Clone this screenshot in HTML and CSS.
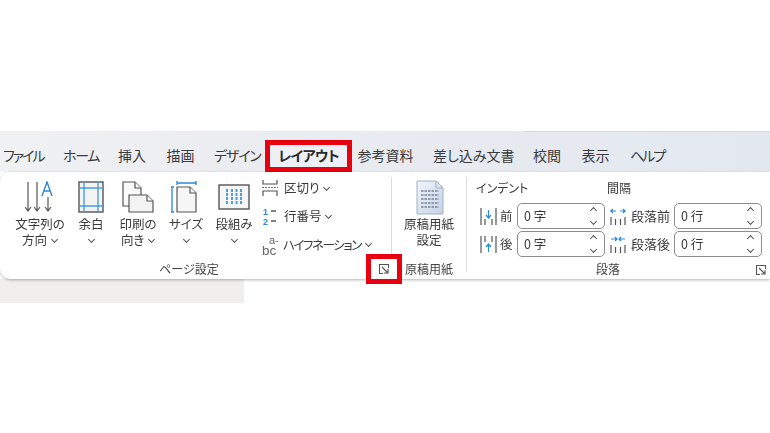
FILE: index.html
```html
<!DOCTYPE html>
<html lang="ja">
<head>
    <meta charset="UTF-8">
    <title>レイアウト</title>
    <link rel="stylesheet" href="styles.css">
</head>
<body>
    <div class="window">
        <nav class="tabs">
            <span class="tab t-file">ファイル</span>
            <span class="tab t-home">ホーム</span>
            <span class="tab t-ins">挿入</span>
            <span class="tab t-draw">描画</span>
            <span class="tab t-design">デザイン</span>
            <span class="tab t-active">レイアウト</span>
            <span class="tab t-ref">参考資料</span>
            <span class="tab t-mail">差し込み文書</span>
            <span class="tab t-rev">校閲</span>
            <span class="tab t-view">表示</span>
            <span class="tab t-help">ヘルプ</span>
        </nav>
        <div class="ribbon">
            <section class="group g-page">
                <div class="group-body">
                    <div class="big w56">
                        <svg width="30" height="32" viewBox="0 0 30 32" fill="none" stroke="#555" stroke-width="1.2">
                            <path d="M3 1v29M0 26l3 4 3-4M12 1v29M9 26l3 4 3-4M23 16v14M20 26l3 4 3-4"/>
                            <path d="M17 15l5-14 5 14M19 10h6" stroke="#2b88d8" stroke-width="1.4"/>
                        </svg>
                        <span class="big-label">文字列の<br>方向 <i class="chev"></i></span>
                    </div>
                    <div class="big w46">
                        <svg width="26" height="32" viewBox="0 0 26 32" fill="#f3f3f3" stroke="#555" stroke-width="1.4">
                            <rect x="1" y="1" width="24" height="30"/>
                            <path d="M6 1v30M20 1v30M1 7h24M1 25h24" stroke="#4a9fe0" stroke-width="1.4"/>
                        </svg>
                        <span class="big-label">余白<br><i class="chev"></i></span>
                    </div>
                    <div class="big w48">
                        <svg width="32" height="32" viewBox="0 0 32 32" fill="#fafafa" stroke="#555" stroke-width="1.2">
                            <path d="M1 1h12l6 6v18H1z"/>
                            <path d="M13 1v6h6"/>
                            <path d="M7 14h18l6 6v11H7z" fill="#f3f3f3"/>
                            <path d="M25 14v6h6"/>
                        </svg>
                        <span class="big-label">印刷の<br>向き <i class="chev"></i></span>
                    </div>
                    <div class="big w48">
                        <svg class="size-icon" width="26" height="32" viewBox="0 0 26 32" fill="#f6f6f6" stroke="#555" stroke-width="1.2">
                            <path d="M6 6h13l6 6v19H6z"/>
                            <path d="M19 6v6h6"/>
                            <path d="M6 2h19M6 0v4M25 0v4M1 6v25M0 6h3M0 31h3" stroke="#2b88d8" fill="none" stroke-width="1.3"/>
                        </svg>
                        <span class="big-label">サイズ<br><i class="chev"></i></span>
                    </div>
                    <div class="big w48">
                        <svg width="32" height="32" viewBox="0 0 32 32" fill="#f6f6f6" stroke="#555" stroke-width="1.4">
                            <rect x="1" y="4" width="30" height="24"/>
                            <path d="M9 8v16M14 8v16M18.500 8v16M23 8v16" stroke="#4a9fe0" stroke-width="2" stroke-dasharray="3 1"/>
                        </svg>
                        <span class="big-label">段組み<br><i class="chev"></i></span>
                    </div>
                    <div class="small-stack">
                        <div class="small">
                            <svg width="16" height="16" viewBox="0 0 16 16" fill="none" stroke="#555" stroke-width="1.2">
                                <path d="M1 0v4h14V0M1 16v-5h14v5"/>
                                <path d="M0 7.500h16" stroke="#2b88d8" stroke-dasharray="2 1"/>
                            </svg>
                            <span>区切り <i class="chev"></i></span>
                        </div>
                        <div class="small">
                            <svg width="16" height="20" viewBox="0 0 16 20">
                                <text x="1" y="9" class="num">1</text>
                                <text x="1" y="19" class="num">2</text>
                                <path d="M9 5h5M9 15h5" stroke="#555" stroke-width="1.3"/>
                            </svg>
                            <span>行番号 <i class="chev"></i></span>
                        </div>
                        <div class="small small-hy">
                            <svg width="18" height="21" viewBox="0 0 18 21">
                                <text x="7" y="10" class="hy-a">a-</text>
                                <text x="0" y="21" class="hy-bc">bc</text>
                            </svg>
                            <span class="hy-text">ハイフネーション</span><i class="chev"></i>
                        </div>
                    </div>
                </div>
                <div class="group-label page-label">ページ設定</div>
            </section>

            <section class="group g-genko">
                <div class="group-body">
                    <div class="big">
                        <svg width="28" height="35" viewBox="0 0 28 35">
                            <defs>
                                <linearGradient id="doc" x1="0" y1="0" x2="1" y2="1">
                                    <stop offset="0" stop-color="#f2f5fa"/>
                                    <stop offset="1" stop-color="#c4d2e6"/>
                                </linearGradient>
                            </defs>
                            <path d="M1 1h19l7 7v26H1z" fill="url(#doc)" stroke="#9fb2cc"/>
                            <path d="M20 1v7h7z" fill="#dfe7f2" stroke="#9fb2cc"/>
                            <path d="M5 11h18M5 15h18M5 19h18M5 23h18M5 27h18" stroke="#8e9cb0" stroke-width="2" stroke-dasharray="2.500 1"/>
                        </svg>
                        <span class="big-label genko-label">原稿用紙<br>設定</span>
                    </div>
                </div>
                <div class="group-label">原稿用紙</div>
            </section>

            <section class="group g-para">
                <div class="para-grid">
                    <div class="para-head">インデント</div>
                    <div class="para-head head-gap">間隔</div>

                    <div class="para-name">
                        <svg width="17" height="17" viewBox="0 0 17 17" stroke="#555" stroke-width="1.2" fill="none">
                            <path d="M1 0v17M16 0v17M5 11v6M12 11v6"/>
                            <path d="M8.500 2v8M6 7l2.500 3L11 7" stroke="#2b88d8"/>
                        </svg>
                        <span>前</span>
                    </div>
                    <div class="spin"><span>0 字</span><div class="arrows"><i class="up"></i><i class="down"></i></div></div>
                    <div class="para-name gap-name">
                        <svg width="16" height="17" viewBox="0 0 16 17" stroke="#555" stroke-width="1.2" fill="none">
                            <path d="M1 9v8M5.500 11v6M10.500 11v6M15 9v8"/>
                            <path d="M0 3h6M3 1L1 3l2 2M10 3h6M13 1l2 2-2 2" stroke="#2b88d8"/>
                        </svg>
                        <span>段落前</span>
                    </div>
                    <div class="spin"><span>0 行</span><div class="arrows"><i class="up"></i><i class="down"></i></div></div>

                    <div class="para-name">
                        <svg width="17" height="17" viewBox="0 0 17 17" stroke="#555" stroke-width="1.2" fill="none">
                            <path d="M1 0v17M16 0v17M5 0v6M12 0v6"/>
                            <path d="M8.500 16V8M6 11l2.500-3L11 11" stroke="#2b88d8"/>
                        </svg>
                        <span>後</span>
                    </div>
                    <div class="spin"><span>0 字</span><div class="arrows"><i class="up"></i><i class="down"></i></div></div>
                    <div class="para-name gap-name">
                        <svg width="16" height="17" viewBox="0 0 16 17" stroke="#555" stroke-width="1.2" fill="none">
                            <path d="M1 9v8M5.500 11v6M10.500 11v6M15 9v8"/>
                            <path d="M1 3h6M5 1l2 2-2 2M9 3h6M11 1L9 3l2 2" stroke="#2b88d8"/>
                        </svg>
                        <span>段落後</span>
                    </div>
                    <div class="spin"><span>0 行</span><div class="arrows"><i class="up"></i><i class="down"></i></div></div>
                </div>
                <div class="group-label para-label">段落</div>
                <svg class="launcher launcher-para" width="10" height="10" viewBox="0 0 10 10" fill="none" stroke="#555" stroke-width="1.1">
                    <path d="M9.500 4V.5H.5v9H4M3 3l6 6M9 5v4H5"/>
                </svg>
            </section>

            <div class="launcher-mark">
                <svg class="launcher" width="10" height="10" viewBox="0 0 10 10" fill="none" stroke="#555" stroke-width="1.1">
                    <path d="M9.500 4V.5H.5v9H4M3 3l6 6M9 5v4H5"/>
                </svg>
            </div>
        </div>
        <div class="doc-strip"></div>
    </div>
</body>
</html>
```

FILE: styles.css
```css
html, body {
    margin: 0;
    background: #fff;
}
body {
    width: 770px;
    height: 433px;
    overflow: hidden;
    font-family: "Noto Sans CJK JP", "Noto Sans", sans-serif;
    color: #3a3a3a;
    font-feature-settings: "palt";
}
.window {
    padding-top: 131px;
    filter: blur(0.35px);
}

/* tab row */
.tabs {
    display: flex;
    align-items: center;
    height: 41px;
    padding-left: 3px;
    box-sizing: border-box;
    background:
        linear-gradient(90deg, transparent 68%, #d9d9d9 68%) top / 100% 1px no-repeat,
        linear-gradient(90deg, #f0f1f3 0%, #e9ecf0 40%, #e3e8f0 100%);
    font-size: 14px;
    line-height: 1;
}
.tab {
    display: block;
    white-space: nowrap;
    text-align: center;
    padding-top: 6px;
}
.t-file { width: 40px; margin-right: 20px; letter-spacing: -2px; }
.t-home { width: 36px; margin-right: 19px; letter-spacing: -1.3px; }
.t-ins { width: 28px; margin-right: 20px; }
.t-draw { width: 29px; margin-right: 19px; }
.t-design { width: 46px; margin-right: 5px; letter-spacing: -1.2px; }
.t-active {
    width: 87px;
    height: 32px;
    padding: 0;
    align-self: flex-end;
    box-sizing: border-box;
    border: 5px solid #e8000f;
    background: #edf0f4;
    font-weight: 700;
    line-height: 20px;
    letter-spacing: -0.6px;
    color: #2a2a2a;
    margin-right: 5px;
}
.t-ref { width: 57px; margin-right: 19px; }
.t-mail { width: 80px; margin-right: 20px; }
.t-rev { width: 28px; margin-right: 20px; }
.t-view { width: 29px; margin-right: 20px; }
.t-help { width: 34px; letter-spacing: -2px; }

/* ribbon body */
.ribbon {
    position: relative;
    z-index: 1;
    display: flex;
    height: 107px;
    background: #fff;
    border-radius: 10px 0 0 10px;
    box-shadow: 0 1px 3px rgba(0, 0, 0, 0.3);
    font-size: 12.5px;
    line-height: 16px;
}
.group {
    position: relative;
    display: flex;
    flex-direction: column;
    box-sizing: border-box;
}
.group + .group::before {
    content: "";
    position: absolute;
    left: 0;
    top: 5px;
    bottom: 7px;
    width: 1px;
    background: #dcdcdc;
}
.g-page { width: 391px; padding-left: 12px; }
.g-genko { width: 75px; padding-left: 1px; }
.g-para { flex: 1; padding-left: 10px; }
.group-body {
    display: flex;
    height: 90px;
}
.group-label {
    font-size: 12px;
    line-height: 14px;
    text-align: center;
    color: #444;
}
.page-label { padding-right: 25px; }
.para-label { position: absolute; left: 130px; bottom: 3px; }

/* large buttons */
.big {
    display: flex;
    flex-direction: column;
    align-items: center;
    flex: none;
    padding-top: 9px;
}
.w56 { width: 56px; }
.w46 { width: 46px; }
.w48 { width: 48px; }
.big svg { height: 32px; }
.size-icon { margin-right: 5px; }
.big-label {
    margin-top: 3px;
    text-align: center;
    white-space: nowrap;
    line-height: 16px;
}
.g-genko .big { width: 74px; padding-top: 8px; }
.g-genko .big svg { height: 35px; margin-left: 2px; }
.genko-label { margin-top: 1px; }

.chev {
    display: inline-block;
    width: 4px;
    height: 4px;
    margin: 0 1px 3px 2px;
    border-right: 1.2px solid #555;
    border-bottom: 1.2px solid #555;
    transform: rotate(45deg);
}

/* small stacked buttons */
.small-stack {
    display: flex;
    flex-direction: column;
    gap: 9.5px;
    margin-left: 4px;
    padding-top: 6px;
}
.small {
    display: flex;
    align-items: center;
    gap: 6px;
    height: 19px;
    white-space: nowrap;
}
.small svg { overflow: visible; flex: none; }
.small-hy { gap: 3px; }
.hy-text { letter-spacing: -1.4px; }
.num {
    font-family: "Liberation Sans", sans-serif;
    font-size: 9px;
    font-weight: 700;
    fill: #2b88d8;
}
.hy-a {
    font-family: "Liberation Sans", sans-serif;
    font-size: 11px;
    fill: #666;
}
.hy-bc {
    font-family: "Liberation Sans", sans-serif;
    font-size: 13.5px;
    fill: #666;
}

/* paragraph group */
.para-grid {
    display: grid;
    grid-template-columns: 41px 88px 69px 88px;
    grid-auto-rows: 28px;
    align-items: center;
    margin-top: 2px;
}
.para-head {
    grid-column: span 2;
    height: 28px;
    line-height: 28px;
    font-size: 12px;
}
.head-gap { padding-left: 2px; }
.para-name {
    display: flex;
    align-items: center;
    gap: 3px;
    padding-left: 4px;
    white-space: nowrap;
}
.gap-name { padding-left: 5px; gap: 5px; font-size: 13px; }
.spin {
    display: flex;
    align-items: center;
    justify-content: space-between;
    height: 26px;
    box-sizing: border-box;
    padding: 0 6px;
    border: 1.5px solid #8c8c8c;
    border-radius: 5px;
    background: #fff;
    font-size: 12.5px;
}
.arrows {
    display: flex;
    flex-direction: column;
    gap: 6px;
    padding-right: 2px;
}
.arrows i {
    display: block;
    width: 4px;
    height: 4px;
    border-right: 1.2px solid #555;
    border-bottom: 1.2px solid #555;
}
.arrows .up { transform: rotate(-135deg); }
.arrows .down { transform: rotate(45deg); }

/* dialog launchers */
.launcher { display: block; }
.launcher-para {
    position: absolute;
    right: 4px;
    bottom: 4px;
}
.launcher-mark {
    position: absolute;
    left: 366px;
    top: 82px;
    width: 36px;
    height: 30px;
    box-sizing: border-box;
    border: 5px solid #e8000f;
    background: #fff;
    display: flex;
    align-items: center;
    justify-content: center;
}

/* strip of document area under the ribbon */
.doc-strip {
    width: 244px;
    height: 24px;
    background: #f1efed;
}
```
